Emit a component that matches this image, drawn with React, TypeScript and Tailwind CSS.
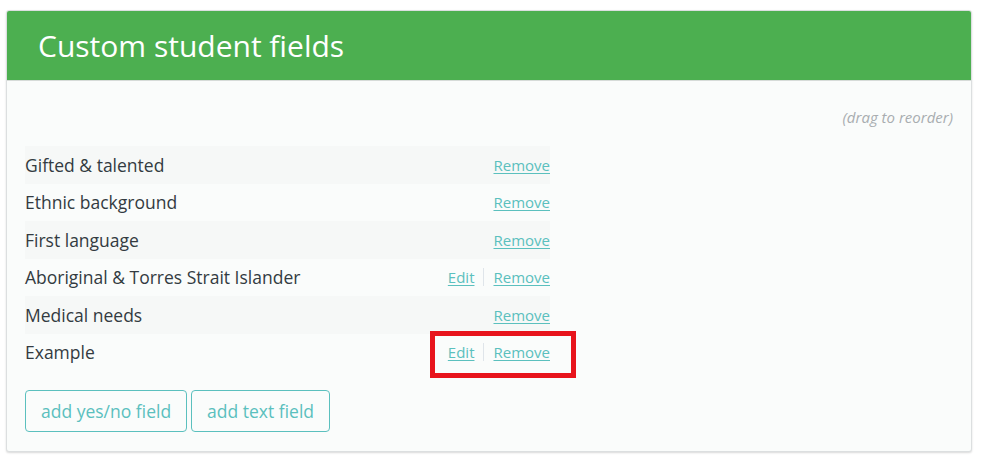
const fields = [
  { name: 'Gifted & talented', edit: false },
  { name: 'Ethnic background', edit: false },
  { name: 'First language', edit: false },
  { name: 'Aboriginal & Torres Strait Islander', edit: true },
  { name: 'Medical needs', edit: false },
  { name: 'Example', edit: true, highlight: true },
]

export default function App() {
  return (
    <div className="min-h-[473px] bg-white pt-[10px] pl-[6px] pr-[11px] font-['Open_Sans',sans-serif]">
      <div className="rounded-[3px] border border-[#dcdfe0] bg-[#fafcfb] shadow-[0_1px_2px_rgba(0,0,0,0.15)] overflow-hidden">
        <div className="h-[70px] bg-[#4caf50] border-b border-[#d6dbd8] pl-[31px] flex items-center">
          <h1 className="text-[30px] text-white leading-none">Custom student fields</h1>
        </div>
        <div className="px-[18px] pt-[26px] pb-[19px]">
          <div className="text-right text-[15px] italic text-[#a8adb0] leading-[20px]">(drag to reorder)</div>
          <ul className="mt-[19px] w-[525px]">
            {fields.map((f, i) => (
              <li
                key={f.name}
                className={`h-[37.5px] flex items-center justify-between text-[17.5px] text-[#333b41] ${i % 2 === 0 ? 'bg-[#f6f8f7]' : ''}`}
              >
                <span>{f.name}</span>
                <span className="relative flex items-center text-[15px] text-[#5bc0be]">
                  {f.edit && (
                    <>
                      <a href="#" className="underline underline-offset-2">Edit</a>
                      <span className="mx-[9px] h-[18px] w-px bg-[#dfe5ea]" />
                    </>
                  )}
                  <a href="#" className="underline underline-offset-2">Remove</a>
                  {f.highlight && (
                    <span className="absolute -left-[18px] -right-[26px] -top-[10px] -bottom-[14px] border-[5px] border-[#e8141c]" />
                  )}
                </span>
              </li>
            ))}
          </ul>
          <div className="mt-[19px] flex gap-[4px]">
            <button className="h-[42px] px-[15px] rounded-[4px] border border-[#5bc0be] text-[17.5px] text-[#5bc0be] bg-transparent">add yes/no field</button>
            <button className="h-[42px] px-[15px] rounded-[4px] border border-[#5bc0be] text-[17.5px] text-[#5bc0be] bg-transparent">add text field</button>
          </div>
        </div>
      </div>
    </div>
  )
}
